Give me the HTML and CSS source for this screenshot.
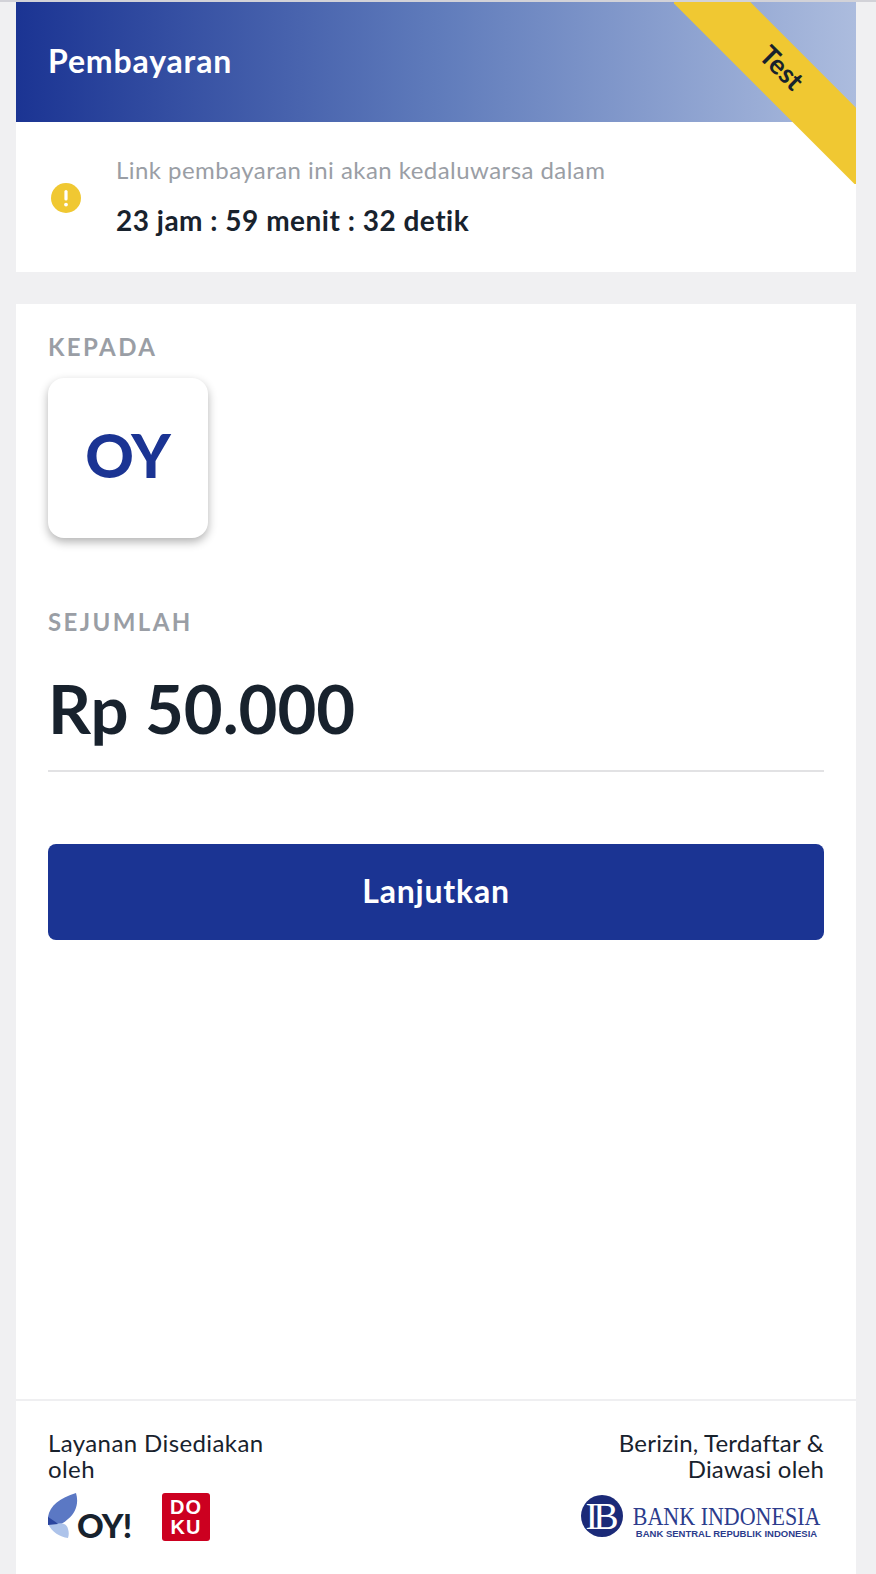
FILE: index.html
```html
<!DOCTYPE html>
<html lang="id">

<head>
    <meta charset="UTF-8">
    <meta name="viewport" content="width=device-width, initial-scale=1.0">
    <title>Pembayaran</title>
    <link rel="stylesheet" href="styles.css">
</head>

<body>
    <div class="page">
        <section class="top-card">
            <!-- test mode ribbon sits over the header corner -->
            <div class="ribbon">
                <div class="ribbon-strip"><span>Test</span></div>
            </div>
            <header class="header">
                <h1>Pembayaran</h1>
            </header>
            <div class="notice">
                <svg class="notice-icon" viewBox="0 0 30 30" aria-hidden="true">
                    <circle cx="15" cy="15" r="15" fill="#f0c832" />
                    <rect x="13.4" y="7" width="3.2" height="10.5" rx="1.6" fill="#fff" />
                    <circle cx="15" cy="21.6" r="1.9" fill="#fff" />
                </svg>
                <div class="notice-text">
                    <p class="notice-label">Link pembayaran ini akan kedaluwarsa dalam</p>
                    <p class="notice-time">23 jam : 59 menit : 32 detik</p>
                </div>
            </div>
        </section>

        <section class="main-card">
            <div class="content">
                <h2 class="label">KEPADA</h2>
                <div class="merchant-logo"><span>OY</span></div>
                <h2 class="label label-amount">SEJUMLAH</h2>
                <div class="amount">Rp 50.000</div>
                <button class="submit" type="button">Lanjutkan</button>
            </div>

            <footer class="footer">
                <div class="footer-col">
                    <p class="footer-text">Layanan Disediakan oleh</p>
                    <div class="partner-logos">
                        <div class="oy-logo">
                            <svg class="oy-leaf" viewBox="0 0 30 46" aria-hidden="true">
                                <path d="M0 24C2 12 12 5 28 0C31 10 28 20 20 26C16 30 11 32 7 33L0 31Z" fill="#5b78c4" />
                                <path d="M0 31L8 31C14 29 19 31 20 36C21 39 21 42 20 45C12 44 4 39 0 31Z" fill="#adc3ea" />
                                <path d="M0 24C3 26 7 28 10 31L0 32Z" fill="#2a459f" />
                            </svg>
                            <span class="oy-word">OY!</span>
                        </div>
                        <div class="doku-logo"><span>DO</span><span>KU</span></div>
                    </div>
                </div>
                <div class="footer-col footer-col-right">
                    <p class="footer-text">Berizin, Terdaftar &amp; Diawasi oleh</p>
                    <div class="bi-logo">
                        <div class="bi-seal">IB</div>
                        <div class="bi-words">
                            <span class="bi-name">BANK INDONESIA</span>
                            <span class="bi-sub">BANK SENTRAL REPUBLIK INDONESIA</span>
                        </div>
                    </div>
                </div>
            </footer>
        </section>
    </div>
</body>

</html>
```

FILE: styles.css
```css
* {
    box-sizing: border-box;
}

html,
body {
    height: 100%;
}

body {
    margin: 0;
    background-color: #f0f0f2;
    font-family: Lato, "Open Sans", sans-serif;
    color: #18222d;
}

h1,
h2,
p {
    margin: 0;
}

.page {
    display: flex;
    flex-direction: column;
    gap: 32px;
    min-height: 100%;
    padding: 0 20px 0 16px;
    border-top: 2px solid #d2d2d8;
}

.top-card {
    position: relative;
    background: white;
}

.header {
    display: flex;
    align-items: center;
    height: 120px;
    padding-left: 32px;
    padding-bottom: 3px;
    background: linear-gradient(90deg, #1b3493 0%, #5f7bbb 50%, #acbcde 100%);
}

.header h1 {
    font-size: 32px;
    font-weight: 700;
    letter-spacing: 0.85px;
    color: white;
}

/* Corner ribbon */
.ribbon {
    position: absolute;
    top: 0;
    right: 0;
    width: 182px;
    height: 182px;
    overflow: hidden;
}

.ribbon-strip {
    position: absolute;
    top: 44.5px;
    left: -20px;
    display: flex;
    align-items: center;
    justify-content: center;
    width: 260px;
    height: 54.5px;
    background-color: #f0c832;
    transform: rotate(45deg);
}

.ribbon-strip span {
    position: relative;
    top: -4px;
    left: -6px;
    font-size: 27px;
    font-weight: 700;
}

.notice {
    display: flex;
    align-items: center;
    gap: 35px;
    height: 150px;
    padding-left: 35px;
}

.notice-icon {
    flex: none;
    width: 30px;
    height: 30px;
    margin-top: 1px;
}

.notice-text {
    margin-bottom: 4px;
}

.notice-label {
    font-size: 24px;
    line-height: 30px;
    letter-spacing: 0.45px;
    color: #9a9ea5;
}

.notice-time {
    margin-top: 20px;
    font-size: 28px;
    line-height: 30px;
    font-weight: 700;
    letter-spacing: 0.5px;
}

.main-card {
    display: flex;
    flex: 1;
    flex-direction: column;
    background: white;
}

.content {
    flex: 1;
    padding: 29px 32px 0;
}

.label {
    font-size: 24px;
    line-height: 28px;
    font-weight: 700;
    letter-spacing: 2.4px;
    color: #9a9ea5;
}

.merchant-logo {
    display: flex;
    align-items: center;
    justify-content: center;
    width: 160px;
    height: 160px;
    margin-top: 17px;
    padding-bottom: 6px;
    border-radius: 16px;
    box-shadow: 0 4px 10px rgba(0, 0, 0, 0.3);
    font-size: 60px;
    font-weight: 900;
    color: #1b3493;
}

.label-amount {
    margin-top: 70px;
}

.amount {
    margin-top: 32px;
    padding-bottom: 22px;
    border-bottom: 2px solid #e2e2e4;
    font-size: 67px;
    line-height: 80px;
    font-weight: 700;
}

.submit {
    display: block;
    width: 100%;
    height: 96px;
    margin-top: 72px;
    padding-bottom: 5px;
    border: none;
    border-radius: 8px;
    background-color: #1b3493;
    color: white;
    font-family: inherit;
    font-size: 32px;
    font-weight: 700;
    letter-spacing: 0.8px;
}

.footer {
    display: flex;
    justify-content: space-between;
    height: 175px;
    padding: 29px 32px 0;
    border-top: 2px solid #efeff1;
}

.footer-col {
    width: 240px;
}

.footer-col-right {
    width: 260px;
    text-align: right;
}

.footer-text {
    font-size: 24px;
    line-height: 26px;
    letter-spacing: 0.4px;
}

.footer-col-right .footer-text {
    letter-spacing: 0.2px;
}

.partner-logos {
    display: flex;
    align-items: flex-start;
    gap: 32px;
    margin-top: 11px;
}

.oy-logo {
    display: flex;
    align-items: flex-end;
    width: 82px;
    height: 46px;
}

.oy-leaf {
    flex: none;
    width: 30px;
    height: 46px;
}

.oy-word {
    margin-left: -1px;
    font-size: 33px;
    line-height: 28px;
    font-weight: 900;
    letter-spacing: -0.6px;
}

.doku-logo {
    display: flex;
    flex-direction: column;
    align-items: center;
    justify-content: center;
    width: 48px;
    height: 48px;
    border-radius: 3px;
    background-color: #cc0020;
    color: white;
    font-family: "Liberation Sans", sans-serif;
    font-size: 20px;
    line-height: 20px;
    font-weight: 700;
    letter-spacing: 1px;
}

.bi-logo {
    display: flex;
    align-items: flex-start;
    justify-content: flex-end;
    gap: 10px;
    margin-top: 13px;
    margin-left: -40px;
}

.bi-seal {
    display: flex;
    align-items: center;
    justify-content: center;
    width: 42px;
    height: 42px;
    border-radius: 50%;
    background-color: #1b2a78;
    color: white;
    font-family: "Liberation Serif", serif;
    font-size: 38px;
    line-height: 42px;
    letter-spacing: -5px;
    text-indent: -5px;
}

.bi-words {
    display: flex;
    flex-direction: column;
    align-items: center;
    width: 187px;
    margin-right: 4px;
    padding-top: 10px;
    color: #2c3c8c;
}

/* the wordmark is narrower than the serif we have */
.bi-name {
    font-family: "Liberation Serif", serif;
    font-size: 25px;
    line-height: 24px;
    white-space: nowrap;
    transform: scaleX(0.88);
}

.bi-sub {
    font-family: "Liberation Sans", sans-serif;
    font-size: 9.5px;
    line-height: 10px;
    font-weight: 700;
    white-space: nowrap;
}
```
